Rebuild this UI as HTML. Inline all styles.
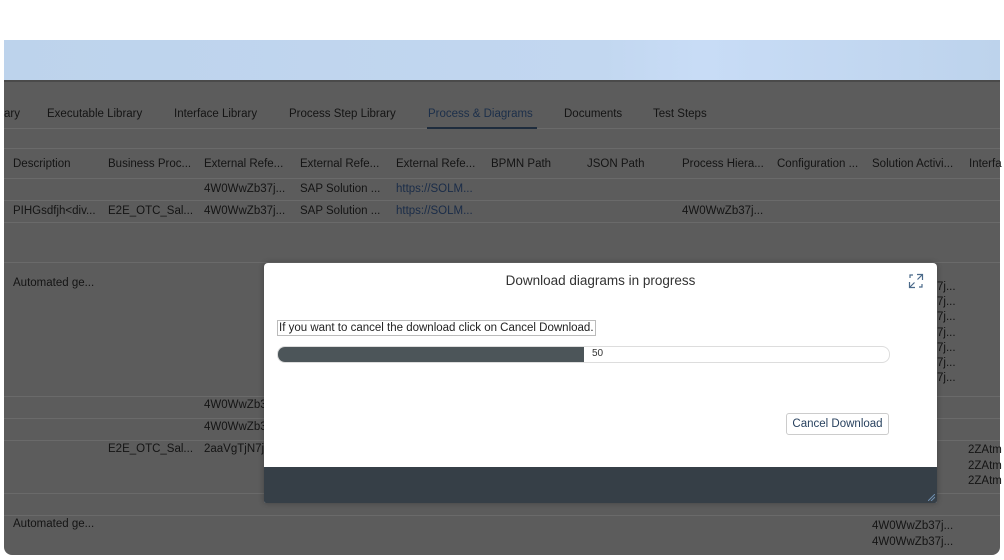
<!DOCTYPE html>
<html><head><style>
body{margin:0;width:1004px;height:560px;background:#fff;position:relative;overflow:hidden;font-family:"Liberation Sans",sans-serif;}
.t{position:absolute;font-size:11.5px;color:#141414;white-space:nowrap;}
.h{color:#151515;}
.ln{position:absolute;left:4px;width:996px;height:1px;background:#6a6a6a;}
</style></head><body>
<div style="position:absolute;left:4px;top:40px;width:996px;height:40px;background:linear-gradient(90deg,#bdd3ec 0%,#c2d7f0 60%,#c8dcf6 70%,#bdd3ec 100%);"></div>
<div style="position:absolute;left:4px;top:80px;width:996px;height:475px;background:#5c5c5c;border-radius:0 0 8px 8px;"></div>
<div style="position:absolute;left:4px;top:80px;width:996px;height:2px;background:#4a4a4a;"></div>
<div class="ln" style="top:128px"></div>
<div style="position:absolute;left:427px;top:127px;width:110px;height:2px;background:#1e2c3d;"></div>
<div class="t" style="left:4px;top:108px">ary</div>
<div class="t" style="left:47px;top:108px">Executable Library</div>
<div class="t" style="left:174px;top:108px">Interface Library</div>
<div class="t" style="left:289px;top:108px">Process Step Library</div>
<div class="t" style="left:428px;top:108px;color:#1c2f4a">Process &amp; Diagrams</div>
<div class="t" style="left:564px;top:108px">Documents</div>
<div class="t" style="left:653px;top:108px">Test Steps</div>
<div class="ln" style="top:148px"></div>
<div class="ln" style="top:178px"></div>
<div class="ln" style="top:200px"></div>
<div class="ln" style="top:222px"></div>
<div class="ln" style="top:262px"></div>
<div class="ln" style="top:396px"></div>
<div class="ln" style="top:418px"></div>
<div class="ln" style="top:440px"></div>
<div class="ln" style="top:493px"></div>
<div class="ln" style="top:515px"></div>
<div class="t" style="left:13px;top:158px">Description</div>
<div class="t" style="left:108px;top:158px">Business Proc...</div>
<div class="t" style="left:204px;top:158px">External Refe...</div>
<div class="t" style="left:300px;top:158px">External Refe...</div>
<div class="t" style="left:396px;top:158px">External Refe...</div>
<div class="t" style="left:491px;top:158px">BPMN Path</div>
<div class="t" style="left:587px;top:158px">JSON Path</div>
<div class="t" style="left:682px;top:158px">Process Hiera...</div>
<div class="t" style="left:777px;top:158px">Configuration ...</div>
<div class="t" style="left:872px;top:158px">Solution Activi...</div>
<div class="t" style="left:969px;top:158px">Interfa</div>
<div class="t" style="left:204px;top:183px">4W0WwZb37j...</div>
<div class="t" style="left:300px;top:183px">SAP Solution ...</div>
<div class="t" style="left:396px;top:183px;color:#1a2c48">https://SOLM...</div>
<div class="t" style="left:13px;top:205px">PIHGsdfjh&lt;div...</div>
<div class="t" style="left:108px;top:205px">E2E_OTC_Sal...</div>
<div class="t" style="left:204px;top:205px">4W0WwZb37j...</div>
<div class="t" style="left:300px;top:205px">SAP Solution ...</div>
<div class="t" style="left:396px;top:205px;color:#1a2c48">https://SOLM...</div>
<div class="t" style="left:682px;top:205px">4W0WwZb37j...</div>
<div class="t" style="left:13px;top:277px">Automated ge...</div>
<div class="t" style="left:937px;top:280px;line-height:15.2px">7j...<br>7j...<br>7j...<br>7j...<br>7j...<br>7j...<br>7j...</div>
<div class="t" style="left:204px;top:399px">4W0WwZb37j...</div>
<div class="t" style="left:204px;top:421px">4W0WwZb37j...</div>
<div class="t" style="left:108px;top:443px">E2E_OTC_Sal...</div>
<div class="t" style="left:204px;top:443px">2aaVgTjN7j...</div>
<div class="t" style="left:968px;top:443px;line-height:15.5px">2ZAtm<br>2ZAtm<br>2ZAtm</div>
<div class="t" style="left:13px;top:518px">Automated ge...</div>
<div class="t" style="left:872px;top:518px;line-height:16px">4W0WwZb37j...<br>4W0WwZb37j...</div>
<!-- dialog -->
<div style="position:absolute;left:264px;top:263px;width:673px;height:240px;background:#fff;border-radius:4px 4px 2px 2px;overflow:hidden;box-shadow:0 0 6px rgba(0,0,0,.3);">
 <div style="position:absolute;left:0;top:204px;width:673px;height:36px;background:#363f47;"></div>
 <div style="position:absolute;left:0;top:10px;width:673px;text-align:center;font-size:13.5px;color:#333;">Download diagrams in progress</div>
 <svg style="position:absolute;left:644px;top:10px" width="16" height="16" viewBox="0 0 16 16" fill="none" stroke="#4b6a8a" stroke-width="1.2"><path d="M9 1.5h5.5V7M14.5 1.5L9.5 6.5M7 14.5H1.5V9M1.5 14.5L6.5 9.5M2 5V2h3M14 11v3h-3"/></svg>
 <div style="position:absolute;left:13px;top:57px;border:1px solid #bbb;padding:0 1px;font-size:11.5px;color:#222;line-height:14px;">If you want to cancel the download click on Cancel Download.</div>
 <div style="position:absolute;left:13px;top:83px;width:611px;height:15px;border:1px solid #ddd;border-radius:8px;overflow:hidden;background:#fff;">
  <div style="width:306px;height:15px;background:#4c5559;"></div>
  <div style="position:absolute;left:314px;top:1px;font-size:10px;color:#333;">50</div>
 </div>
 <div style="position:absolute;left:522px;top:150px;width:101px;height:20px;border:1px solid #ccc;border-radius:3px;font-size:11.5px;color:#29425f;text-align:center;line-height:20px;">Cancel Download</div>
 <svg style="position:absolute;left:664px;top:231px" width="7" height="7"><path d="M0 7L7 0M3 7L7 3" stroke="#6f8fb0"/></svg>
</div>
</body></html>
